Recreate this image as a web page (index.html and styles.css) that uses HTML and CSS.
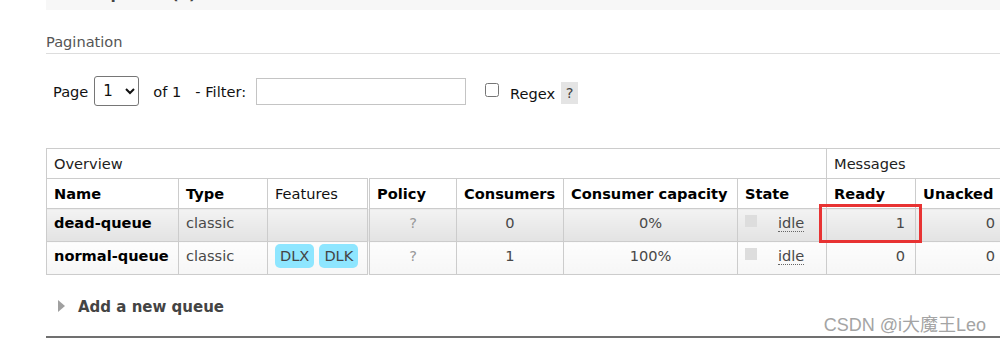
FILE: index.html
```html
<!DOCTYPE html>
<html lang="en">
<head>
  <meta charset="UTF-8" />
  <title>Queues</title>
  <link rel="stylesheet" href="styles.css">
</head>
<body>
  <div class="page">
    <div class="section-head">
      <h2 class="toggle">All queues (2)</h2>
    </div>

    <h3 class="sub">Pagination</h3>
    <div class="filter-bar">
      <label for="page">Page</label>
      <select id="page" class="page-select">
        <option>1</option>
      </select>
      <span class="of">of 1</span>
      <label for="filter" class="filter-label">- Filter:</label>
      <input type="text" id="filter" class="filter-input">
      <input type="checkbox" id="regex" class="regex-check">
      <label for="regex" class="regex-label">Regex</label>
      <span class="help">?</span>
    </div>

    <div class="table-wrap">
      <table class="queues">
        <colgroup>
          <col style="width:132px"><col style="width:89px"><col style="width:101px">
          <col style="width:88px"><col style="width:107px"><col style="width:174px">
          <col style="width:89px"><col style="width:89px"><col style="width:90px"><col style="width:90px">
        </colgroup>
        <thead>
          <tr class="group">
            <th colspan="7">Overview</th>
            <th colspan="3">Messages</th>
          </tr>
          <tr class="cols">
            <th>Name</th>
            <th>Type</th>
            <th class="plain features">Features</th>
            <th>Policy</th>
            <th>Consumers</th>
            <th>Consumer capacity</th>
            <th>State</th>
            <th>Ready</th>
            <th>Unacked</th>
            <th>Total</th>
          </tr>
        </thead>
        <tbody>
          <tr class="alt">
            <td class="name">dead-queue</td>
            <td>classic</td>
            <td class="features"></td>
            <td class="c muted">?</td>
            <td class="c">0</td>
            <td class="c">0%</td>
            <td class="state"><span class="dot"></span><abbr>idle</abbr></td>
            <td class="r mark">1<span class="highlight"></span></td>
            <td class="r">0</td>
            <td class="r">1</td>
          </tr>
          <tr>
            <td class="name">normal-queue</td>
            <td>classic</td>
            <td class="features"><span class="tag">DLX</span><span class="tag">DLK</span></td>
            <td class="c muted">?</td>
            <td class="c">1</td>
            <td class="c">100%</td>
            <td class="state"><span class="dot"></span><abbr>idle</abbr></td>
            <td class="r">0</td>
            <td class="r">0</td>
            <td class="r">0</td>
          </tr>
        </tbody>
      </table>
    </div>

    <h2 class="toggle add">Add a new queue</h2>
  </div>

  <div class="watermark">CSDN @i大魔王Leo</div>
</body>
</html>
```

FILE: styles.css
```css
html, body {
  margin: 0;
  overflow: hidden;
}

body {
  font-family: "DejaVu Sans", Verdana, sans-serif;
  font-size: 14.6px;
  color: #484848;
  background: #fff;
  position: relative;
  height: 344px;
}

.page {
  padding-left: 46px;
}

/* Section headers */
.section-head {
  background: #f7f7f7;
  margin-top: -16px;
  padding-bottom: 6px;
}

.toggle {
  margin: 0;
  padding-left: 32px;
  font-size: 15px;
  line-height: 20px;
  font-weight: bold;
  color: #444;
  position: relative;
}

.toggle::before {
  content: "";
  position: absolute;
  left: 12px;
  top: 3px;
  border-left: 7px solid #a0a0a0;
  border-top: 6px solid transparent;
  border-bottom: 6px solid transparent;
}

.sub {
  margin: 23px 0 0;
  padding-bottom: 2px;
  font-size: 14.6px;
  line-height: 18px;
  font-weight: normal;
  color: #555;
  border-bottom: 1px solid #ddd;
}

/* Pagination / filter */
.filter-bar {
  display: flex;
  align-items: center;
  margin-top: 22px;
  padding-left: 7px;
  height: 30px;
  color: #111;
}

.page-select {
  margin-left: 6px;
  width: 45px;
  height: 30px;
  font-family: inherit;
  font-size: 15px;
  color: #111;
  background: #fff;
  border: 1px solid #767676;
  border-radius: 3px;
  padding: 0 4px;
}

.of {
  margin-left: 14px;
}

.filter-label {
  margin-left: 14px;
}

.filter-input {
  margin: 0 0 0 10px;
  width: 210px;
  height: 27px;
  box-sizing: border-box;
  border: 1px solid #c4c4c4;
  padding: 2px 4px;
}

.regex-check {
  margin: 0 0 0 19px;
  width: 14px;
  height: 14px;
  position: relative;
  top: -1px;
}

.regex-label {
  margin-left: 11px;
  position: relative;
  top: 2px;
}

.help {
  margin-left: 6px;
  width: 17px;
  height: 22px;
  line-height: 22px;
  text-align: center;
  background: #e4e4e4;
  color: #444;
  position: relative;
  top: 2px;
}

/* Queue table */
.table-wrap {
  margin-top: 42px;
  overflow: hidden;
}

.queues {
  border-collapse: collapse;
  table-layout: fixed;
  width: 1049px;
}

.queues th,
.queues td {
  border: 1px solid #ccc;
  padding: 0 7px;
  text-align: left;
  white-space: nowrap;
  vertical-align: middle;
}

.queues th {
  height: 29px;
  color: #000;
}

.queues .group th {
  font-weight: normal;
  color: #222;
}

.queues th.plain {
  font-weight: normal;
  color: #111;
}

.queues .features {
  border-right: 3px double #ccc;
}

.queues td {
  vertical-align: top;
  line-height: 24px;
  padding-top: 2px;
  padding-bottom: 6px;
  height: 24px;
  background: linear-gradient(#fdfdfd, #f6f6f6);
}

.queues tr.alt td {
  background: linear-gradient(#f3f3f3, #e3e3e3);
}

.queues td.name {
  font-weight: bold;
  color: #000;
}

.queues .c {
  text-align: center;
}

.queues .r {
  text-align: right;
  padding-right: 10px;
}

.queues .muted {
  color: #999;
}

.tag {
  display: inline-block;
  background: #8ee6ff;
  color: #444;
  border-radius: 5px;
  padding: 0 5px;
  line-height: 24px;
  margin-right: 5px;
}

.state .dot {
  display: inline-block;
  width: 12px;
  height: 12px;
  background: #ddd;
  margin-right: 21px;
  vertical-align: 1px;
}

.state abbr {
  text-decoration: none;
  border-bottom: 1px dotted #666;
}

.mark {
  position: relative;
}

.highlight {
  position: absolute;
  left: -8px;
  right: -7px;
  top: -5px;
  bottom: -2px;
  border: 3px solid #e83333;
}

/* Add queue */
.add {
  margin-top: 22px;
  padding-bottom: 19px;
  border-bottom: 2px solid #707070;
}

.watermark {
  position: absolute;
  right: 14px;
  bottom: 8px;
  font-family: "Liberation Sans", "Noto Sans CJK SC", sans-serif;
  font-size: 18px;
  color: #a4a4a4;
  text-shadow: 0 0 2px #fff, 0 0 2px #fff;
}
```
